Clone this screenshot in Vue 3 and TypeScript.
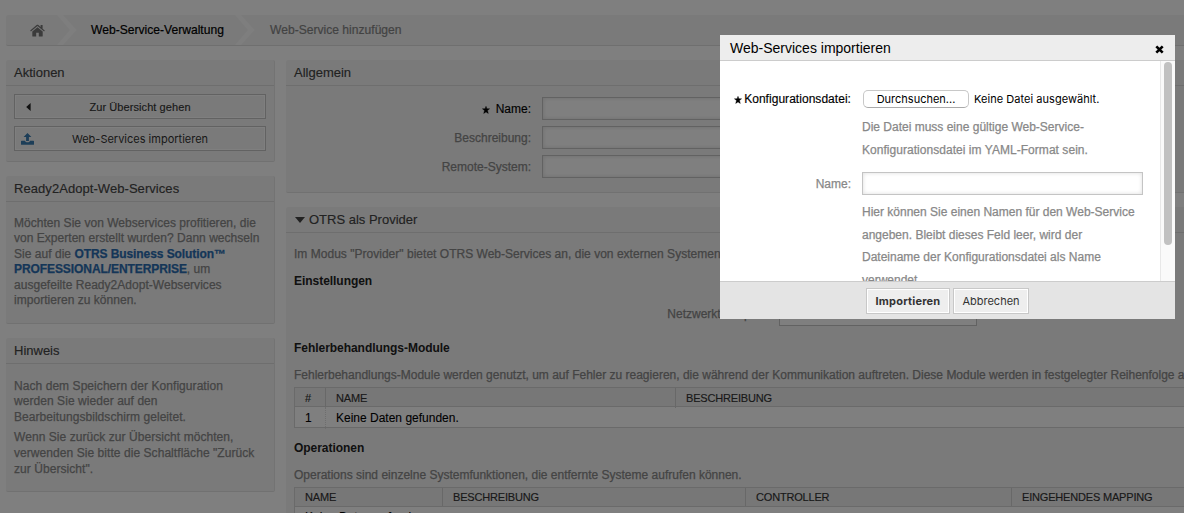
<script setup lang="ts">
interface Field {
  label: string
  required: boolean
}

const fields: Field[] = [
  { label: 'Name:', required: true },
  { label: 'Beschreibung:', required: false },
  { label: 'Remote-System:', required: false },
]
</script>

<template>
  <div class="screen">
    <div class="page">
      <nav class="crumbs">
        <svg class="home" width="15" height="13" viewBox="0 0 15 13">
          <path d="M7.500 3.200 2.300 7.500v4.400c0 .4.200.6.600.6h3.300V8.800h2.600v3.700h3.300c.4 0 .6-.2.600-.6V7.500z" />
          <path d="M14.800 6.600 12.600 4.700V1h-2v2L8.400 1.100C7.900.7 7.100.7 6.600 1.100L.2 6.600l.7.800 6.600-5.500L14.100 7.400z" />
        </svg>
        <svg class="chev" width="20" height="30" viewBox="0 0 20 30">
          <path d="M0 0h6l13.500 15L6 30H0l13-15z" />
        </svg>
        <span class="crumb one">Web-Service-Verwaltung</span>
        <svg class="chev" width="20" height="30" viewBox="0 0 20 30">
          <path d="M0 0h6l13.500 15L6 30H0l13-15z" />
        </svg>
        <span class="crumb two">Web-Service hinzufügen</span>
      </nav>

      <div class="columns">
        <aside class="side">
          <section class="panel actions">
            <h2><span class="t-akt">Aktionen</span></h2>
            <div class="action-list">
              <div class="action">
                <svg class="caret" width="5" height="8" viewBox="0 0 5 8"><path d="M4.600 0v8L.2 4z" /></svg>
                <span class="t-back">Zur Übersicht gehen</span>
              </div>
              <div class="action">
                <svg class="upload" width="13" height="12" viewBox="0 0 13 12">
                  <path d="M6.500 0 10.400 4H7.900v4H5.100V4H2.600z" />
                  <path d="M0 8.300c0-.4.2-.6.6-.6h3.500c.2 1 1.100 1.600 2.400 1.600s2.200-.6 2.400-1.600h3.500c.4 0 .6.2.6.6v2.900c0 .4-.2.600-.6.600H.6c-.4 0-.6-.2-.6-.6z" />
                </svg>
                <span class="t-imp">Web-Services importieren</span>
              </div>
            </div>
          </section>

          <section class="panel ready">
            <h2><span class="t-ready">Ready2Adopt-Web-Services</span></h2>
            <p class="copy">
              Möchten Sie von Webservices profitieren, die<br />
              von Experten erstellt wurden? Dann wechseln<br />
              Sie auf die <b>OTRS Business Solution™</b><br />
              <b>PROFESSIONAL/ENTERPRISE</b>, um<br />
              ausgefeilte Ready2Adopt-Webservices<br />
              importieren zu können.
            </p>
          </section>

          <section class="panel hint">
            <h2>Hinweis</h2>
            <p class="copy">
              Nach dem Speichern der Konfiguration<br />
              werden Sie wieder auf den<br />
              Bearbeitungsbildschirm geleitet.
            </p>
            <p class="copy second">
              Wenn Sie zurück zur Übersicht möchten,<br />
              verwenden Sie bitte die Schaltfläche "Zurück<br />
              zur Übersicht".
            </p>
          </section>
        </aside>

        <main class="main">
          <section class="panel general">
            <h2>Allgemein</h2>
            <div class="fields">
              <div v-for="f in fields" :key="f.label" class="field">
                <label :class="{ required: f.required }">
                  <svg v-if="f.required" class="star" width="8" height="8" viewBox="0 0 8 8">
                    <path d="M4 .3 4.900 2.700 7.600 2.800 5.500 4.600 6.300 7.400 4 5.900 1.700 7.400 2.500 4.600 .4 2.800 3.100 2.700z" />
                  </svg>
                  <span>{{ f.label }}</span>
                </label>
                <div class="box"></div>
              </div>
            </div>
          </section>

          <section class="panel provider">
            <h2>
              <svg class="tri" width="10" height="6" viewBox="0 0 10 6"><path d="M0 0h10L5 6z" /></svg>
              <span>OTRS als Provider</span>
            </h2>
            <div class="prov-body">
              <p class="desc d1">Im Modus "Provider" bietet OTRS Web-Services an, die von externen Systemen genutzt werden können.</p>
              <h3 class="k1">Einstellungen</h3>
              <div class="transport">
                <label>Netzwerktransport:</label>
                <div class="select"></div>
              </div>
              <h3 class="k2">Fehlerbehandlungs-Module</h3>
              <p class="desc d2">Fehlerbehandlungs-Module werden genutzt, um auf Fehler zu reagieren, die während der Kommunikation auftreten. Diese Module werden in festgelegter Reihenfolge ausgeführt.</p>
              <div class="table modules">
                <div class="tr th"><span>#</span><span>NAME</span><span>BESCHREIBUNG</span></div>
                <div class="tr td"><span>1</span><span>Keine Daten gefunden.</span><span></span></div>
              </div>
              <h3 class="k3">Operationen</h3>
              <p class="desc d3">Operations sind einzelne Systemfunktionen, die entfernte Systeme aufrufen können.</p>
              <div class="table operations">
                <div class="tr th"><span>NAME</span><span>BESCHREIBUNG</span><span>CONTROLLER</span><span>EINGEHENDES MAPPING</span></div>
                <div class="tr td"><span>Keine Daten gefunden.</span></div>
              </div>
            </div>
          </section>
        </main>
      </div>
    </div>

    <div class="overlay"></div>

    <div class="dialog" role="dialog">
      <header>
        <span>Web-Services importieren</span>
        <svg class="close" width="9" height="9" viewBox="0 0 9 9">
          <path d="M1.300 1.300 7.700 7.700M7.700 1.300 1.300 7.700" />
        </svg>
      </header>
      <div class="scroller">
        <div class="form">
          <div class="row file">
            <label class="required">
              <svg class="star" width="8" height="8" viewBox="0 0 8 8">
                <path d="M4 .3 4.900 2.700 7.600 2.800 5.500 4.600 6.300 7.400 4 5.900 1.700 7.400 2.500 4.600 .4 2.800 3.100 2.700z" />
              </svg>
              <span class="t-kon">Konfigurationsdatei:</span>
            </label>
            <div class="picker">
              <span class="browse">Durchsuchen...</span>
              <span class="nofile">Keine Datei ausgewählt.</span>
            </div>
          </div>
          <p class="help help1">
            Die Datei muss eine gültige Web-Service-<br />
            <span class="wide">Konfigurationsdatei im YAML-Format sein.</span>
          </p>
          <div class="row name">
            <label>Name:</label>
            <div class="box"></div>
          </div>
          <p class="help help2">
            Hier können Sie einen Namen für den Web-Service<br />
            angeben. Bleibt dieses Feld leer, wird der<br />
            Dateiname der Konfigurationsdatei als Name<br />
            verwendet.
          </p>
        </div>
        <div class="track"><div class="thumb"></div></div>
      </div>
      <footer>
        <div class="btn primary">Importieren</div>
        <div class="btn">Abbrechen</div>
      </footer>
    </div>
  </div>
</template>

<style>
body {
  margin: 0;
  overflow: hidden;
}
</style>

<style scoped>
* {
  box-sizing: border-box;
}
.screen {
  position: relative;
  width: 1184px;
  height: 513px;
  overflow: hidden;
  background: #fff;
  font: 12px/16px "Liberation Sans", Arial, sans-serif;
  color: #000;
  white-space: nowrap;
}
.page {
  width: 1300px;
  height: 513px;
  padding: 15px 0 0 6px;
  overflow: hidden;
}
.overlay {
  position: absolute;
  inset: 0;
  background: rgba(0, 0, 0, 0.5);
}
svg {
  display: block;
  flex: none;
}

.crumbs {
  display: flex;
  align-items: center;
  height: 31px;
  background: #f5f5f5;
  border-bottom: 1px solid #dedede;
  border-radius: 2px;
}
.home {
  margin: 0 12px 0 24px;
  fill: #777;
}
.chev {
  fill: #fcfcfc;
}
.crumb {
  font-size: 12.100px;
  -webkit-text-stroke: 0.2px;
}
.crumb.one {
  width: 133px;
  margin: 0 11px 0 14px;
}
.crumb.two {
  margin-left: 15px;
  color: #858585;
}

.columns {
  display: flex;
  gap: 11px;
  margin-top: 14px;
}
.side {
  width: 269px;
  flex: none;
}
.main {
  flex: 1;
  min-width: 0;
}
.panel {
  background: #f5f5f5;
  border-right: 1px solid #e6e6e6;
  border-bottom: 1px solid #e3e3e3;
  border-radius: 2px;
}
.panel h2 {
  display: flex;
  align-items: center;
  height: 26px;
  margin: 0;
  padding: 0 8px;
  border-bottom: 1px solid #ddd;
  font-size: 13px;
  font-weight: normal;
  color: #444;
  -webkit-text-stroke: 0.15px;
}
.actions {
  height: 102px;
}
.action-list {
  display: flex;
  flex-direction: column;
  gap: 7px;
  padding: 8px 8px 0;
}
.action {
  display: flex;
  align-items: center;
  width: 252px;
  height: 25px;
  border: 1px solid #c4c4c4;
  box-shadow: inset 0 0 0 1px #fff;
  color: #333;
}
.action span {
  flex: 1;
  text-align: center;
}
.caret {
  margin: 0 0 0 11px;
  fill: #222;
}
.t-back {
  margin-right: 16px;
  font-size: 11px;
  letter-spacing: 0.08px;
  -webkit-text-stroke: 0.15px;
}
.upload {
  margin-left: 6px;
  fill: #3a7cb0;
}
.t-imp {
  margin-right: 19px;
  font-family: Inter, sans-serif;
  font-size: 11px;
}
.t-ready {
  letter-spacing: 0.06px;
}
.copy {
  margin: 0;
  padding: 0 8px;
  line-height: 15.600px;
  letter-spacing: 0.03px;
  color: #888;
  -webkit-text-stroke: 0.25px;
}
.copy b {
  letter-spacing: -0.08px;
  color: #2a6cb0;
}
.ready {
  height: 148px;
  margin-top: 14px;
}
.ready .copy {
  padding-top: 13.500px;
}
.hint {
  height: 154px;
  margin-top: 14px;
}
.hint h2 {
  padding-top: 1px;
}
.hint .copy {
  padding-top: 14.600px;
  letter-spacing: 0.06px;
}
.hint .copy.second {
  padding-top: 5px;
}

.general {
  height: 133px;
}
.fields {
  display: flex;
  flex-direction: column;
  gap: 6px;
  padding-top: 11px;
}
.field {
  display: flex;
  align-items: center;
}
.field label {
  display: flex;
  align-items: center;
  justify-content: flex-end;
  gap: 6px;
  width: 245px;
  margin-right: 11px;
  color: #888;
  -webkit-text-stroke: 0.25px;
}
.field label.required,
.row label.required {
  color: #000;
  -webkit-text-stroke: 0.15px;
}
.star {
  fill: #000;
  stroke: #000;
  stroke-width: 0.400;
  position: relative;
  top: 1px;
}
.box {
  width: 500px;
  height: 23px;
  background: #fff;
  border: 1px solid #c4c4c4;
  box-shadow: inset 0 0 4px #ddd;
}
.provider {
  height: 500px;
  margin-top: 14px;
}
.tri {
  margin: 0 4px 0 1px;
  fill: #444;
}
.prov-body {
  padding: 13px 0 0 8px;
}
.desc {
  height: 16px;
  margin: 0;
  color: #888;
  -webkit-text-stroke: 0.25px;
}
.d1 {
  letter-spacing: 0.02px;
}
h3 {
  height: 16px;
  margin: 11px 0 0;
  font-size: 12px;
  letter-spacing: -0.04px;
  color: #222;
}
.transport {
  display: flex;
  align-items: center;
  height: 24px;
  margin-top: 13px;
}
.transport label {
  width: 474px;
  margin-right: 11px;
  text-align: right;
  color: #888;
  -webkit-text-stroke: 0.25px;
}
.select {
  width: 198px;
  height: 24px;
  border: 1px solid #c4c4c4;
  background: #fff;
}
.provider h3.k2 {
  margin-top: 14px;
}
.d2,
.d3 {
  margin-top: 11px;
}
.provider h3.k3 {
  margin-top: 12px;
}
.table {
  margin-top: 4px;
  border: 1px solid #d5d5d5;
  border-right: 0;
  background: #fff;
}
.tr {
  display: grid;
}
.modules .tr {
  grid-template-columns: 30px 350px 1fr;
}
.operations .tr {
  grid-template-columns: 147px 303px 266px 1fr;
}
.tr span {
  padding-left: 10px;
}
.th {
  height: 19px;
  background: #eee;
  border-bottom: 1px solid #d5d5d5;
  font-size: 11px;
  line-height: 20px;
  letter-spacing: -0.18px;
  color: #333;
  -webkit-text-stroke: 0.15px;
}
.operations .th {
  line-height: 18px;
}
.th span + span {
  border-left: 1px solid #d0d0d0;
}
.td {
  height: 20px;
  line-height: 22px;
  -webkit-text-stroke: 0.1px;
}
.operations .td {
  line-height: 20px;
}
.td span + span {
  border-left: 1px dotted #ddd;
}
.td span + span:last-child {
  border-left: 0;
}

.dialog {
  position: absolute;
  left: 720px;
  top: 35px;
  width: 455px;
  height: 284px;
  background: #fff;
}
.dialog header {
  display: flex;
  align-items: center;
  justify-content: space-between;
  height: 26px;
  padding: 0 11px 0 10px;
  background: #ededed;
  border-bottom: 1px solid #ccc;
  font-size: 14px;
}
.close {
  margin-top: 3px;
  stroke: #000;
  stroke-width: 2.600;
}
.scroller {
  display: flex;
  height: 220px;
  overflow: hidden;
}
.form {
  width: 440px;
  padding-top: 28px;
}
.row {
  display: flex;
  align-items: center;
}
.row label {
  display: flex;
  align-items: center;
  justify-content: flex-end;
  gap: 2px;
  width: 131px;
  margin-right: 11px;
  color: #888;
  -webkit-text-stroke: 0.25px;
}
.t-kon {
  letter-spacing: 0.04px;
}
.file {
  height: 20px;
}
.picker {
  display: flex;
  align-items: center;
  gap: 5px;
  padding-left: 1px;
  font-family: Inter, sans-serif;
  font-size: 11px;
}
.browse {
  display: flex;
  align-items: center;
  justify-content: center;
  width: 106px;
  height: 18px;
  border: 1px solid #c8c8c8;
  border-bottom-color: #aaa;
  border-radius: 5px;
}
.nofile {
  letter-spacing: 0.04px;
}
.help {
  margin: 0 0 0 142px;
  line-height: 22.600px;
  color: #888;
  -webkit-text-stroke: 0.25px;
}
.wide {
  letter-spacing: 0.04px;
}
.help1 {
  padding-top: 7px;
}
.name {
  margin-top: 11px;
}
.name .box {
  width: 281px;
}
.help2 {
  padding-top: 6px;
}
.track {
  width: 15px;
  padding: 1px 0 0 3px;
  background: #fafafa;
  border-left: 1px solid #e8e8e8;
}
.thumb {
  width: 8px;
  height: 183px;
  border-radius: 4px;
  background: #c1c1c1;
}
.dialog footer {
  display: flex;
  justify-content: flex-start;
  gap: 3px;
  height: 38px;
  padding: 6px 0 0 146px;
  background: #e4e4e4;
  border-top: 1px solid #ccc;
}
.btn {
  display: flex;
  align-items: center;
  justify-content: center;
  width: 76px;
  height: 26px;
  padding-bottom: 1px;
  background: #eee;
  border: 1px solid #c8c8c8;
  box-shadow: inset 0 0 0 1px #fff;
  font-family: Inter, sans-serif;
  font-size: 11px;
  color: #333;
}
.btn.primary {
  width: 84px;
  font-weight: bold;
  letter-spacing: 0.2px;
}
</style>
